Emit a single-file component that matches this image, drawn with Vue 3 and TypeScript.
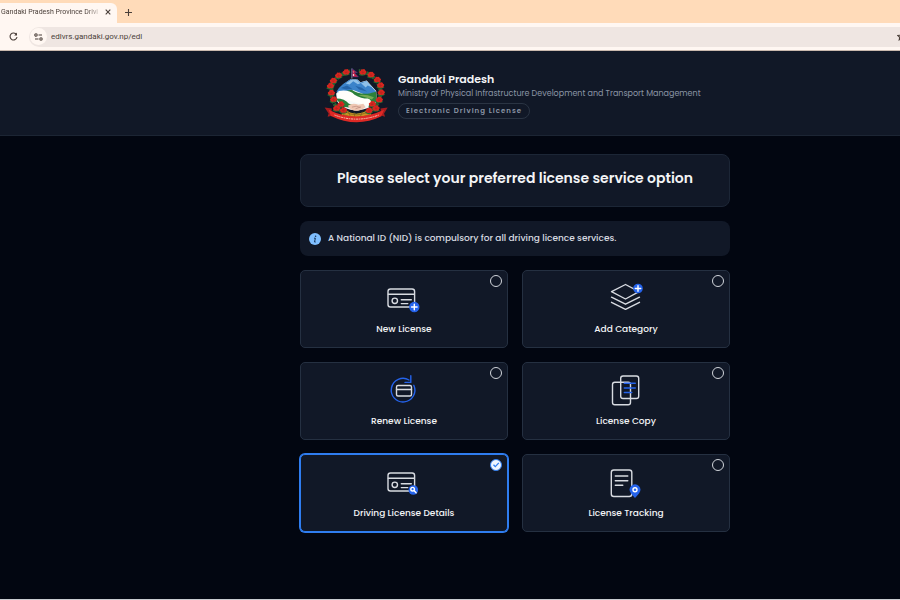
<script setup lang="ts">
import { ref } from 'vue'

type IconName = 'new' | 'category' | 'renew' | 'copy' | 'details' | 'tracking'

interface Service {
  id: IconName
  label: string
}

const services: Service[] = [
  { id: 'new', label: 'New License' },
  { id: 'category', label: 'Add Category' },
  { id: 'renew', label: 'Renew License' },
  { id: 'copy', label: 'License Copy' },
  { id: 'details', label: 'Driving License Details' },
  { id: 'tracking', label: 'License Tracking' },
]

const selected = ref<IconName>('details')
const address = ref('edlvrs.gandaki.gov.np/edl')

// Centres of the rhododendrons that wreathe the emblem
const blossoms: [number, number][] = [
  [107, 50], [84, 60], [68, 76], [59, 92], [62, 113], [69, 133], [91, 148], [78, 160], [99, 166],
  [158, 50], [183, 58], [202, 73], [212, 90], [214, 112], [208, 134], [187, 147], [198, 160], [177, 167],
]
</script>

<template>
  <div class="screen">
    <div class="browser">
      <div class="tabs">
        <div class="tab">
          <span class="tab-title">Gandaki Pradesh Province Drivi</span>
          <button class="chrome-button" type="button" aria-label="Close tab">
            <svg width="6" height="6" viewBox="0 0 6 6"><path d="M.7.7l4.6 4.6M5.3.7L.7 5.3" /></svg>
          </button>
        </div>
        <button class="chrome-button new-tab" type="button" aria-label="New tab">
          <svg width="7" height="7" viewBox="0 0 7 7"><path d="M3.5 0v7M0 3.5h7" /></svg>
        </button>
      </div>
      <div class="toolbar">
        <button class="chrome-button reload" type="button" aria-label="Reload">
          <svg width="9" height="9" viewBox="0 0 9 9">
            <path d="M7.5 2.6A3.5 3.5 0 1 0 8 5" />
            <path d="M8 .6v2.8H5.2z" fill="#4a3f39" stroke="none" />
          </svg>
        </button>
        <div class="address">
          <button class="chrome-button site-info" type="button" aria-label="Site information">
            <svg width="9" height="8" viewBox="0 0 9 8">
              <circle cx="2" cy="2" r="1.2" /><path d="M4.5 2H8M1 6h3.500" /><circle cx="7" cy="6" r="1.2" />
            </svg>
          </button>
          <input v-model="address" class="address-input" type="text" aria-label="Address" />
          <button class="chrome-button star" type="button" aria-label="Bookmark">
            <svg width="9" height="9" viewBox="0 0 9 9">
              <path d="M4.5.8l1.1 2.4 2.6.3-1.9 1.8.5 2.6-2.3-1.3-2.3 1.3.5-2.6L.8 3.5l2.6-.3z" />
            </svg>
          </button>
        </div>
      </div>
    </div>

    <header class="site-header">
      <svg class="emblem" viewBox="40 36 195 168" role="img" aria-label="Gandaki Pradesh emblem">
        <ellipse cx="137" cy="114" rx="75" ry="68" fill="none" stroke="#286332" stroke-width="11" stroke-dasharray="13 3" />
        <path d="M77 116Q94 84 134 65L151 81L170 76L199 108L201 140Q180 165 140 167Q98 166 80 140z" fill="#f7faf9" />
        <path d="M78 110Q92 84 134 66L151 82L169 77L200 112L166 119L129 105L94 119z" fill="#3b83ca" />
        <path d="M106 85L133 67L151 84L143 87L129 78L118 88zM153 84L170 78L188 97L173 91L167 97z" fill="#8fc0e8" />
        <path d="M91 99L110 91L126 101L108 103zM135 92L155 98L171 109L147 103z" fill="#2464a9" />
        <path d="M124 104Q146 119 174 116L198 110L202 137L184 154Q174 136 145 129Q116 122 106 108z" fill="#2c8039" />
        <path d="M84 108Q116 102 133 119Q153 131 174 131Q188 136 184 153Q154 148 132 141Q105 132 80 131z" fill="#fffefa" />
        <path d="M75 131Q102 130 116 147L138 152L131 160L99 156z" fill="#26813a" />
        <path d="M145 121Q164 116 192 127L186 134Q166 126 145 121z" fill="#75aa54" />
        <path d="M102 163Q137 191 178 163L184 180Q139 199 93 180z" fill="#c99423" />
        <path d="M102 170Q139 191 177 170M97 179Q138 197 181 179M112 166l10 24M132 173l2 17M157 171l-8 19" fill="none" stroke="#795b1b" stroke-width="2" />
        <path d="M113 153Q127 142 145 150L160 147L167 157Q151 169 133 168Q118 166 113 153z" fill="#efc7b3" />
        <path d="M125 157Q138 151 151 158M136 162l17-6" fill="none" stroke="#b98678" stroke-width="2" />
        <g v-for="([x, y], i) in blossoms" :key="i">
          <path :d="`M${x - 12} ${y + 8}q12 7 24 -1l-6 -9h-12z`" fill="#276831" />
          <path
            :d="`M${x - 9} ${y + 4}q-4 -6 3 -8q1 -6 6 -4q7 -3 8 4q7 3 1 8q-1 6 -7 3q-8 3 -11 -3z`"
            fill="#d9261f"
          />
          <path :d="`M${x - 4} ${y}l4 3l5 -3M${x} ${y - 4}v7`" fill="none" stroke="#89251f" stroke-width="1" />
        </g>
        <path d="M121 38h25v34h-25z" fill="#111827" />
        <path d="M125 39v31" stroke="#c7ccdc" stroke-width="2" />
        <path d="M126 40l16 12h-9l12 13h-19z" fill="#c71d41" stroke="#273f98" stroke-width="1.5" />
        <path d="M128 48l4 3h-4zM130 56l3 3-3 3-3-3z" fill="#fff" />
        <path d="M42 158l22 3l-3 23l-10 2l3-10zM234 158l-22 3l4 22l10 3l-3-10z" fill="#a51c1e" />
        <path d="M54 165Q136 206 223 165L215 185Q139 222 61 184z" fill="#de2925" />
        <path d="M72 181Q138 206 207 181" fill="none" stroke="#f6c3b0" stroke-width="3" stroke-dasharray="4 2 7 2" />
      </svg>
      <div class="identity">
        <h1>Gandaki Pradesh</h1>
        <p>Ministry of Physical Infrastructure Development and Transport Management</p>
        <span class="badge">Electronic Driving License</span>
      </div>
    </header>

    <main class="content">
      <section class="heading-card">
        <h2>Please select your preferred license service option</h2>
      </section>

      <div class="notice">
        <svg width="12" height="12" viewBox="0 0 12 12" aria-hidden="true">
          <circle cx="6" cy="6" r="6" fill="#7fbfff" />
          <circle cx="6.6" cy="3.2" r=".8" fill="#17365c" />
          <path d="M5 5.2h1.4L5.5 9h1.2" fill="none" stroke="#17365c" stroke-width="1" />
        </svg>
        <p>A National ID (NID) is compulsory for all driving licence services.</p>
      </div>

      <div class="services" role="radiogroup" aria-label="License service">
        <label
          v-for="service in services"
          :key="service.id"
          class="service"
          :class="{ active: selected === service.id }"
        >
          <input v-model="selected" type="radio" name="service" :value="service.id" />
          <svg class="check" viewBox="0 0 12 12" aria-hidden="true">
            <path d="M3.5 5.7l1.8 1.9 3.5-3.7" />
          </svg>
          <svg class="icon" viewBox="0 0 36 32" aria-hidden="true">
            <template v-if="service.id === 'new' || service.id === 'details'">
              <rect x="2" y="8" width="26.600" height="18" rx="2.500" />
              <path d="M2.300 13.300h26M15.300 18.800h10M15.300 22.600h6.500" />
              <circle cx="8.800" cy="19.800" r="2.700" />
              <template v-if="service.id === 'new'">
                <circle class="solid" cx="28.300" cy="26" r="5.200" />
                <path class="mark" d="M28.300 23.200v5.600M25.500 26h5.600" />
              </template>
              <template v-else>
                <circle class="solid" cx="27.300" cy="25" r="4.800" />
                <circle class="mark" cx="26.600" cy="24.200" r="1.800" />
                <path class="mark" d="M28 25.600l2.100 2.100" />
              </template>
            </template>
            <template v-else-if="service.id === 'category'">
              <path d="M17.500 3.500L31 10.700L17.500 18L3.500 10.700z" />
              <path d="M3.500 16.200l14 7L31.500 16.200M3.500 21.300l14 7 14-7" />
              <circle class="solid" cx="30" cy="7.500" r="4.800" />
              <path class="mark" d="M30 4.800v5.400M27.300 7.500h5.400" />
            </template>
            <template v-else-if="service.id === 'renew'">
              <path class="blue" d="M23 7A11.800 11.800 0 1 0 27.800 12.300M19 9.400h5.800V2.800" />
              <rect x="10.500" y="12.500" width="15" height="10.500" rx="1.500" />
              <path d="M10.500 16.500h15" />
            </template>
            <template v-else-if="service.id === 'copy'">
              <rect x="4.500" y="9.200" width="18" height="22.500" rx="2.300" />
              <rect x="12.700" y="3" width="18" height="22.500" rx="2.300" />
              <path class="blue" d="M16.300 10.300h11M16.300 15h11M16.300 19.500h7.500" />
            </template>
            <template v-else>
              <rect x="3.300" y="5" width="20.500" height="26.500" rx="2.500" />
              <path d="M7.300 11h12.500M7.300 15.700h12.500M7.300 20.300h7.500" />
              <path class="solid" d="M27 33Q21.500 27.500 21.500 24.800a5.500 5.500 0 1 1 11 0Q32.500 27.500 27 33z" />
              <circle class="mark" cx="27" cy="24.800" r="2" />
            </template>
          </svg>
          <span>{{ service.label }}</span>
        </label>
      </div>
    </main>
  </div>
</template>

<style>
html,
body,
#app {
  height: 100%;
}

body {
  margin: 0;
  background: #020611;
}
</style>

<style scoped>
.screen {
  box-sizing: border-box;
  min-height: 100%;
  overflow: hidden;
  background: #020611;
  border-bottom: 1px solid #c9cbd0;
  color: #f3f4f6;
  font-family: Poppins, Inter, sans-serif;
}

h1,
h2,
p {
  margin: 0;
}

.browser {
  background: #fff7f2;
  border-bottom: 1px solid #c9b9ae;
  color: #4a3f39;
}

.tabs {
  display: flex;
  align-items: center;
  height: 23px;
  padding-top: 1px;
  box-sizing: border-box;
  background: #ffdbb9;
}

.tab {
  display: flex;
  align-items: center;
  justify-content: space-between;
  align-self: flex-end;
  box-sizing: border-box;
  width: 117px;
  height: 20px;
  padding: 0 6px 2px 1px;
  border-radius: 0 6px 0 0;
  background: #fff7f2;
}

.tab-title {
  font: 7px/10px Roboto, sans-serif;
  white-space: nowrap;
  mask-image: linear-gradient(to right, #000 88%, rgb(0 0 0 / 30%));
}

.chrome-button {
  display: flex;
  align-items: center;
  justify-content: center;
  flex-shrink: 0;
  padding: 0;
  border: 0;
  background: none;
}

.chrome-button svg {
  fill: none;
  stroke: #4a3f39;
  stroke-width: 1.1;
}

.new-tab {
  margin-left: 8px;
}

.toolbar {
  display: flex;
  align-items: center;
  gap: 11px;
  height: 27px;
  padding-left: 9px;
}

.address {
  display: flex;
  align-items: center;
  flex: 1;
  gap: 4px;
  height: 20px;
  margin-right: -10px;
  padding: 0 4px 0 1px;
  border-radius: 10px 0 0 10px;
  background: #efe6e2;
}

.site-info {
  width: 17px;
  height: 17px;
  border-radius: 50%;
  background: #fff7f2;
}

.address-input {
  flex: 1;
  min-width: 0;
  padding: 0;
  border: 0;
  background: none;
  color: #4a3f39;
  font: 8px/12px Roboto, sans-serif;
}

.site-header {
  display: flex;
  align-items: center;
  justify-content: center;
  gap: 10px;
  height: 81px;
  padding: 3px 0 0 130px;
  border-bottom: 1px solid #1c2534;
  background: #111827;
}

.emblem {
  flex-shrink: 0;
  width: 64px;
  height: 56px;
}

.identity {
  min-width: 308px;
}

.identity h1 {
  font-size: 11px;
  font-weight: 600;
  line-height: 16px;
}

.identity p {
  color: #8b95a5;
  font-size: 8px;
  line-height: 13px;
}

.badge {
  display: block;
  width: fit-content;
  margin-top: 3px;
  padding: 0 7px;
  border: 1px solid #2a3443;
  border-radius: 8px;
  color: #8b95a5;
  font-size: 7px;
  font-weight: 600;
  letter-spacing: 1px;
  line-height: 14px;
}

.content {
  display: grid;
  grid-template-columns: minmax(0, 430px);
  justify-content: center;
  gap: 14px;
  padding: 18px 0 65px 130px;
}

.heading-card {
  padding: 12px 16px 17px;
  border: 1px solid #1c2636;
  border-radius: 8px;
  background: #111827;
  text-align: center;
}

h2 {
  font-size: 14px;
  font-weight: 600;
  line-height: 22px;
}

.notice {
  display: flex;
  align-items: center;
  gap: 7px;
  height: 35px;
  padding: 0 9px;
  border-radius: 8px;
  background: #111827;
}

.notice p {
  padding-bottom: 2px;
  color: #d8dbe1;
  font-size: 9px;
  font-weight: 500;
  line-height: 14px;
}

.services {
  display: grid;
  grid-template-columns: 1fr 1fr;
  gap: 14px;
}

.service {
  position: relative;
  display: flex;
  flex-direction: column;
  align-items: center;
  gap: 7px;
  box-sizing: border-box;
  height: 78px;
  padding-top: 10px;
  border: 1px solid #253041;
  border-radius: 5px;
  background: #111827;
  font-size: 9px;
  font-weight: 500;
  line-height: 18px;
  cursor: pointer;
}

.service.active {
  border-color: #2f7df0;
  box-shadow: 0 0 0 1px #2f7df0;
}

.service input {
  position: absolute;
  top: 4px;
  right: 5px;
  width: 12px;
  height: 12px;
  margin: 0;
  appearance: none;
  border: 1px solid #d1d5db;
  border-radius: 50%;
}

.service input:checked {
  border-color: #2f7df0;
  background: #eff6ff;
}

.check {
  position: absolute;
  z-index: 1;
  top: 4px;
  right: 5px;
  display: none;
  width: 12px;
  height: 12px;
  fill: none;
  stroke: #2f7df0;
  stroke-width: 1.3;
  pointer-events: none;
}

.active .check {
  display: block;
}

.icon {
  width: 36px;
  height: 32px;
  overflow: visible;
  fill: none;
  stroke: #d8dbe1;
  stroke-width: 1.4;
  stroke-linecap: round;
  stroke-linejoin: round;
}

.icon .solid {
  fill: #2563eb;
  stroke: none;
}

.icon .blue {
  stroke: #2563eb;
}

.icon .mark {
  stroke: #fff;
}
</style>
